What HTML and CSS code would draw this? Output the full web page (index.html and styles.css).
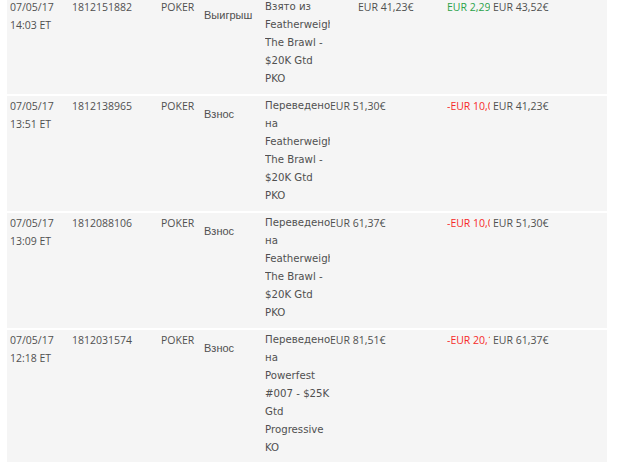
FILE: index.html
```html
<!DOCTYPE html>
<html lang="ru">
<head>
<meta charset="utf-8">
<title>История транзакций</title>
<link rel="stylesheet" href="styles.css">
</head>
<body>
<div class="table">
  <div class="row">
    <div class="cell date">07/05/17<br>14:03 ET</div>
    <div class="cell id">1812151882</div>
    <div class="cell product">POKER</div>
    <div class="cell type">Выигрыш</div>
    <div class="cell desc">Взято из Featherweight The Brawl - $20K Gtd PKO</div>
    <div class="cell money before before-wide">EUR 41,23€</div>
    <div class="cell money amount plus">EUR 2,29€</div>
    <div class="cell money after">EUR 43,52€</div>
  </div>
  <div class="row">
    <div class="cell date">07/05/17<br>13:51 ET</div>
    <div class="cell id">1812138965</div>
    <div class="cell product">POKER</div>
    <div class="cell type">Взнос</div>
    <div class="cell desc">Переведено на Featherweight The Brawl - $20K Gtd PKO</div>
    <div class="cell money before">EUR 51,30€</div>
    <div class="cell money amount minus">-EUR 10,07€</div>
    <div class="cell money after">EUR 41,23€</div>
  </div>
  <div class="row">
    <div class="cell date">07/05/17<br>13:09 ET</div>
    <div class="cell id">1812088106</div>
    <div class="cell product">POKER</div>
    <div class="cell type">Взнос</div>
    <div class="cell desc">Переведено на Featherweight The Brawl - $20K Gtd PKO</div>
    <div class="cell money before">EUR 61,37€</div>
    <div class="cell money amount minus">-EUR 10,07€</div>
    <div class="cell money after">EUR 51,30€</div>
  </div>
  <div class="row">
    <div class="cell date">07/05/17<br>12:18 ET</div>
    <div class="cell id">1812031574</div>
    <div class="cell product">POKER</div>
    <div class="cell type">Взнос</div>
    <div class="cell desc">Переведено на Powerfest #007 - $25K Gtd Progressive KO</div>
    <div class="cell money before">EUR 81,51€</div>
    <div class="cell money amount minus">-EUR 20,14€</div>
    <div class="cell money after">EUR 61,37€</div>
  </div>
</div>
</body>
</html>
```
FILE: styles.css
```css
html, body {
  margin: 0;
  padding: 0;
  background: #ffffff;
}

.table {
  margin: -3px 0 0 7px;
  width: 600px;
  display: flex;
  flex-direction: column;
  gap: 2px;
}

.row {
  display: grid;
  grid-template-columns: 62px 89px 43px 61px 65px 117px 43px 1fr;
  background: #f5f5f5;
  padding: 1px 0 6px 3px;
  color: #505050;
  line-height: 18px;
}

.cell {
  overflow: hidden;
  white-space: nowrap;
}

.date, .id, .product {
  font-family: "Open Sans", "Liberation Sans", sans-serif;
  font-size: 10.5px;
}

.date {
  white-space: normal;
}

.type {
  font-family: "Liberation Sans", Arial, sans-serif;
  font-size: 11px;
  padding-top: 8px;
}

.desc {
  font-family: "DejaVu Sans", Verdana, sans-serif;
  font-size: 10.2px;
  white-space: normal;
  word-break: keep-all;
  overflow-wrap: normal;
}

.money {
  font-family: "Open Sans", "Liberation Sans", sans-serif;
  font-size: 10.5px;
}

.after {
  padding-left: 3px;
}

.before-wide {
  padding-left: 28px;
}

.plus {
  color: #2ba34a;
}

.minus {
  color: #f52a2a;
}
```
